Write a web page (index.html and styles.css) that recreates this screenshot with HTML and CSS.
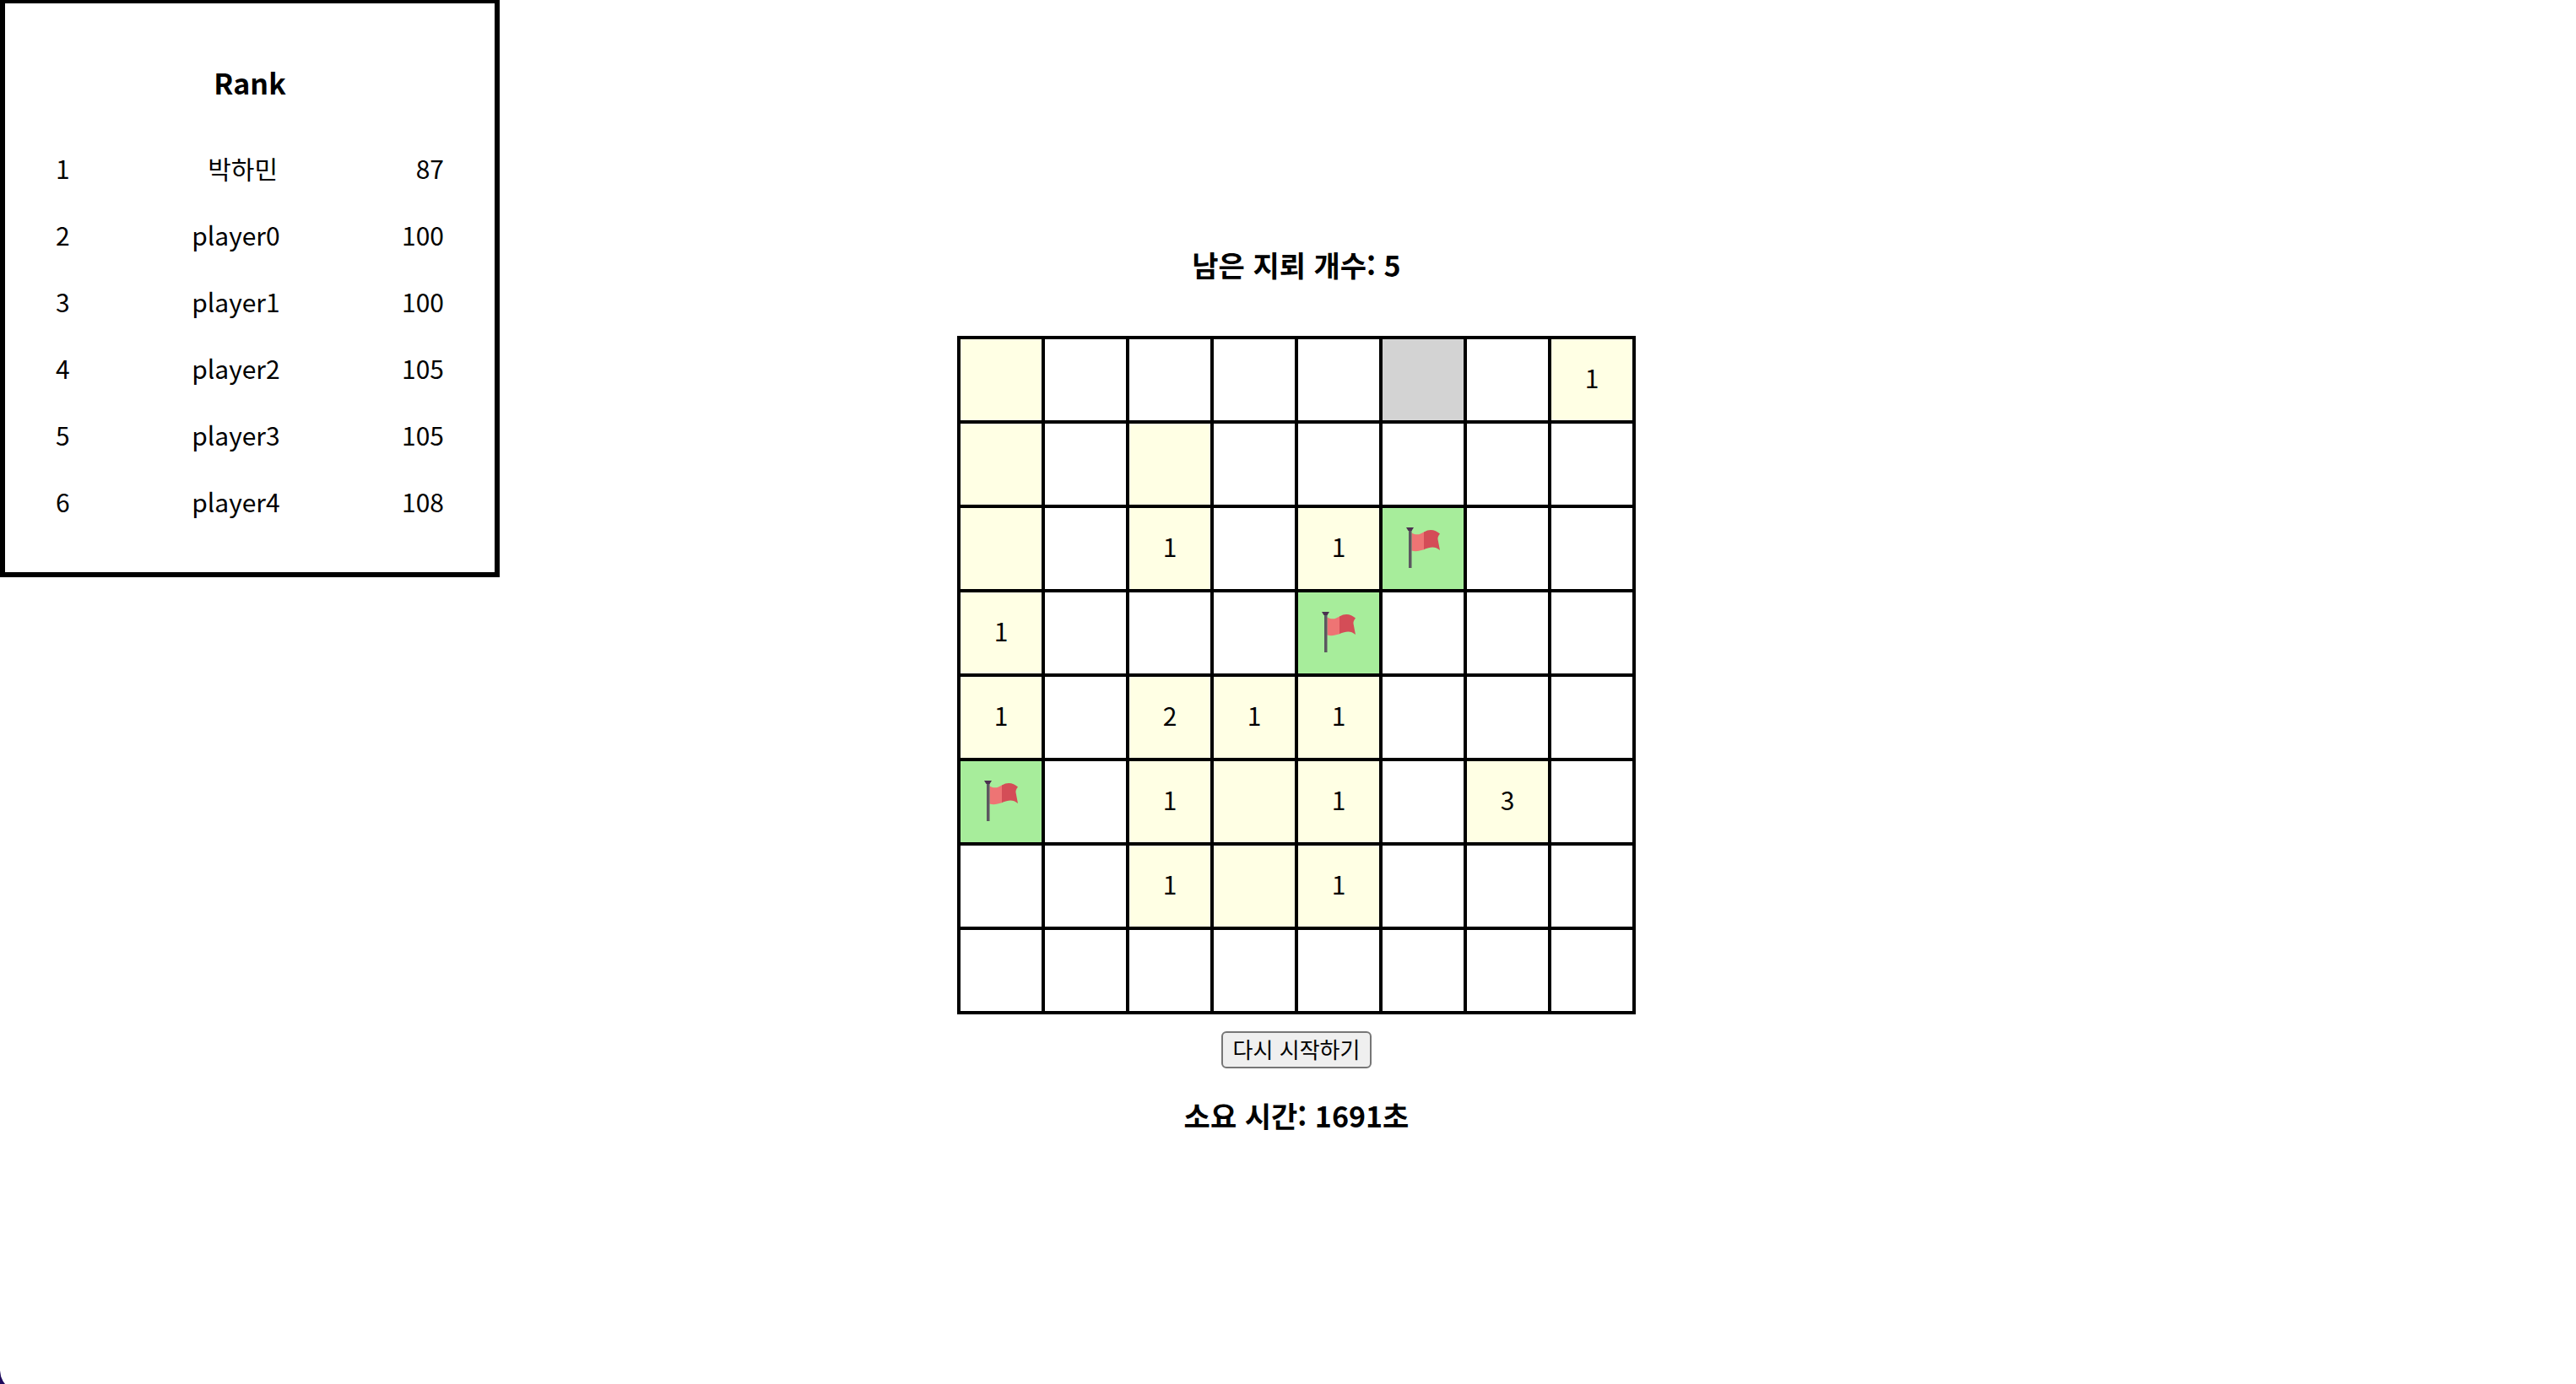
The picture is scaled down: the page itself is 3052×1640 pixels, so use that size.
FILE: index.html
```html
<!DOCTYPE html>
<html lang="ko">
<head>
<meta charset="utf-8">
<title>지뢰찾기</title>
<link rel="stylesheet" href="styles.css">
</head>
<body>
<svg class="defs" aria-hidden="true">
  <symbol id="flag" viewBox="6 0 40 48">
    <path d="M12.500 6.500C16 8.500 20 9 23 7.500L28 5V26L22 27.500Q17 29 12.500 27.500Z" fill="#ee7474"/>
    <path d="M27 5.500C34 1 41 3 46 7.500Q43 11 43.500 14Q45 22 46 27C40 22 35 23 27 26Z" fill="#d44d57"/>
    <path d="M9 1H12.500V48H9Z" fill="#5c5760"/>
    <path d="M6 0H15L12.500 4H8.500Z" fill="#4b3150"/>
  </symbol>
</svg>
<aside class="rank">
  <h1 class="rank-title">Rank</h1>
  <ol class="rank-list">
    <li class="rank-row"><span>1</span><span>박하민</span><span>87</span></li>
    <li class="rank-row"><span>2</span><span>player0</span><span>100</span></li>
    <li class="rank-row"><span>3</span><span>player1</span><span>100</span></li>
    <li class="rank-row"><span>4</span><span>player2</span><span>105</span></li>
    <li class="rank-row"><span>5</span><span>player3</span><span>105</span></li>
    <li class="rank-row"><span>6</span><span>player4</span><span>108</span></li>
  </ol>
</aside>
<main class="game">
  <h2 class="status">남은 지뢰 개수: 5</h2>
  <table class="board">
    <tbody>
      <tr><td class="open"></td><td></td><td></td><td></td><td></td><td class="hover"></td><td></td><td class="open">1</td></tr>
      <tr><td class="open"></td><td></td><td class="open"></td><td></td><td></td><td></td><td></td><td></td></tr>
      <tr><td class="open"></td><td></td><td class="open">1</td><td></td><td class="open">1</td><td class="flagged"><svg class="flag"><use href="#flag"/></svg></td><td></td><td></td></tr>
      <tr><td class="open">1</td><td></td><td></td><td></td><td class="flagged"><svg class="flag"><use href="#flag"/></svg></td><td></td><td></td><td></td></tr>
      <tr><td class="open">1</td><td></td><td class="open">2</td><td class="open">1</td><td class="open">1</td><td></td><td></td><td></td></tr>
      <tr><td class="flagged"><svg class="flag"><use href="#flag"/></svg></td><td></td><td class="open">1</td><td class="open"></td><td class="open">1</td><td></td><td class="open">3</td><td></td></tr>
      <tr><td></td><td></td><td class="open">1</td><td class="open"></td><td class="open">1</td><td></td><td></td><td></td></tr>
      <tr><td></td><td></td><td></td><td></td><td></td><td></td><td></td><td></td></tr>
    </tbody>
  </table>
  <button class="restart" type="button">다시 시작하기</button>
  <h2 class="status">소요 시간: 1691초</h2>
</main>
<div class="corner"></div>
</body>
</html>
```
FILE: styles.css
```css
* { box-sizing: border-box; }
body {
  margin: 0;
  min-height: 100vh;
  display: flex;
  justify-content: center;
  align-items: center;
  position: relative;
  overflow: hidden;
  background: #fff;
  color: #000;
  font: 30px/40px "Noto Sans CJK KR", sans-serif;
}
.defs { display: none; }
.rank {
  position: absolute;
  top: 0;
  left: 0;
  width: 592px;
  padding: 72px 60px 64px;
  border: 6px solid #000;
  border-top-width: 4px;
}
.rank-title {
  margin: 0 0 59px;
  font-size: 34px;
  line-height: 44px;
  text-align: center;
}
.rank-list {
  margin: 0;
  padding: 0;
  list-style: none;
  display: grid;
  gap: 39px;
}
.rank-row { display: flex; justify-content: space-between; }
.game {
  display: flex;
  flex-direction: column;
  align-items: center;
  padding-left: 20px;
}
.status { margin: 32px 0; font-size: 34px; line-height: 48px; }
.board {
  margin: 24px 0 20px;
  border-collapse: collapse;
  table-layout: fixed;
  width: 804px;
}
.board td {
  width: 100px;
  height: 100px;
  padding: 0;
  border: 4px solid #000;
  text-align: center;
  vertical-align: middle;
}
.board .open { padding-bottom: 6px; background: #ffffe4; }
.board .hover { background: #d3d3d3; }
.board .flagged { padding-bottom: 2px; background: #a7ed9b; }
.flag { display: block; width: 40px; height: 48px; margin: 0 auto; }
.game > .status:first-child { margin: 28px 0 36px; }
.restart {
  padding: 0 12px 2px;
  border: 2px solid #767676;
  border-radius: 6px;
  background: #efefef;
  color: #000;
  font: 26px/38px "Noto Sans CJK KR", sans-serif;
}
.corner {
  position: absolute;
  left: 0;
  bottom: 0;
  width: 6px;
  height: 16px;
  background: #1e0a5c;
  clip-path: polygon(0 0, 20% 45%, 60% 80%, 100% 100%, 0 100%);
}
```
